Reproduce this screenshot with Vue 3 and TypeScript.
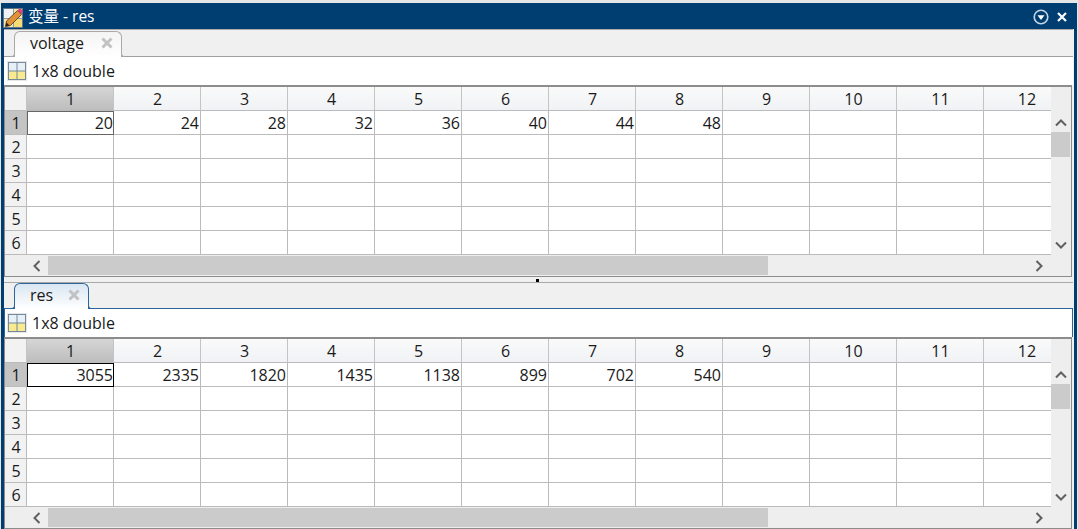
<script setup lang="ts">
interface Pane {
  name: string
  values: number[]
  active: boolean
}

const panes: Pane[] = [
  { name: 'voltage', values: [20, 24, 28, 32, 36, 40, 44, 48], active: false },
  { name: 'res', values: [3055, 2335, 1820, 1435, 1138, 899, 702, 540], active: true }
]
const columns = Array.from({ length: 12 }, (_, i) => i + 1)
const rows = [1, 2, 3, 4, 5, 6]
</script>

<template>
  <div class="window">
    <header class="titlebar">
      <svg class="app-icon" width="20" height="20" viewBox="0 0 20 20">
        <rect x="0.5" y="0.5" width="19" height="19" fill="#f5e9a8" stroke="#5f7587" />
        <rect x="1" y="1" width="9" height="9" fill="#eef2f5" />
        <rect x="10" y="10" width="9" height="9" fill="#f5dc74" />
        <path d="M1 10.5h18M10.5 1v18" stroke="#8b9aa6" />
        <path d="M2.5 18.5l1-5.5L14.5 2.5l4 4L7.5 17.5z" fill="#e0913a" stroke="#5e3f20" stroke-width="0.9" />
        <path d="M2.5 18.5l1-4 3 3z" fill="#2e2114" />
        <path d="M14.5 2.5L17 0l3 3-1.500 3.500z" fill="#d4487a" />
      </svg>
      <span class="title">变量 - res</span>
      <svg class="ctl" width="16" height="16" viewBox="0 0 16 16">
        <circle cx="8" cy="8" r="6.800" fill="none" stroke="#c4d6e6" stroke-width="1.6" />
        <path d="M4.500 6.200h7L8 11z" fill="#fff" />
      </svg>
      <svg class="ctl close" width="12" height="12" viewBox="0 0 12 12">
        <path d="M2 2l8 8M10 2l-8 8" stroke="#fff" stroke-width="2.2" />
      </svg>
    </header>

    <div class="body">
      <template v-for="(pane, idx) in panes" :key="pane.name">
        <div v-if="idx > 0" class="splitter"><i class="dot"></i></div>
        <section class="pane" :class="{ active: pane.active }">
          <div class="tabstrip">
            <div class="tab">
              <span class="tab-name">{{ pane.name }}</span>
              <svg class="tab-x" width="14" height="14" viewBox="0 0 14 14">
                <path d="M2.500 2.500l9 9M11.500 2.500l-9 9" stroke="#c2c2c2" stroke-width="3" />
              </svg>
            </div>
          </div>
          <div class="toolbar">
            <svg width="20" height="20" viewBox="0 0 20 20">
              <rect x="0" y="0" width="20" height="20" fill="#e6e6e6" />
              <rect x="1.500" y="1.500" width="17" height="17" fill="#fff" stroke="#74899b" />
              <rect x="2" y="2" width="16" height="8" fill="#e8f0f7" />
              <rect x="2" y="10" width="16" height="8" fill="#f9e98f" />
              <path d="M2 10h16M10 2v16" stroke="#74899b" />
            </svg>
            <span>1x8 double</span>
          </div>
          <div class="sheet">
            <div class="grid-row head">
              <div class="corner"></div>
              <div v-for="c in columns" :key="c" class="col-head" :class="{ sel: c === 1 }">{{ c }}</div>
              <div class="gutter"></div>
            </div>
            <div class="main">
              <div class="rows">
                <div v-for="r in rows" :key="r" class="grid-row">
                  <div class="row-head" :class="{ sel: r === 1 }">{{ r }}</div>
                  <div
                    v-for="c in columns"
                    :key="c"
                    class="cell"
                    :class="{ current: r === 1 && c === 1 }"
                  >{{ r === 1 ? pane.values[c - 1] : '' }}</div>
                </div>
              </div>
              <div class="vscroll">
                <svg width="12" height="8" viewBox="0 0 12 8"><path d="M1 6.500l5-5 5 5" fill="none" stroke="#606060" stroke-width="2" /></svg>
                <div class="vtrack"><div class="vthumb"></div></div>
                <svg width="12" height="8" viewBox="0 0 12 8"><path d="M1 1.500l5 5 5-5" fill="none" stroke="#606060" stroke-width="2" /></svg>
              </div>
            </div>
            <div class="hscroll">
              <svg width="8" height="12" viewBox="0 0 8 12"><path d="M6.500 1l-5 5 5 5" fill="none" stroke="#606060" stroke-width="2" /></svg>
              <div class="htrack"><div class="hthumb"></div></div>
              <svg width="8" height="12" viewBox="0 0 8 12"><path d="M1.500 1l5 5-5 5" fill="none" stroke="#606060" stroke-width="2" /></svg>
            </div>
          </div>
        </section>
      </template>
    </div>
  </div>
</template>

<style>
html, body { margin: 0; background: #fff; overflow: hidden; }
</style>

<style scoped>
.window {
  width: 1078px;
  height: 529px;
  box-sizing: border-box;
  padding: 3px 1px 0;
  background: #e4e6e8;
  font-family: "Open Sans", "Noto Sans CJK SC", sans-serif;
  font-size: 16px;
  color: #1a1a1a;
  display: flex;
  flex-direction: column;
  overflow: hidden;
}
.titlebar {
  height: 26px;
  flex: none;
  background: #003e72;
  color: #fff;
  display: flex;
  align-items: center;
  padding: 0 9px 0 2px;
  gap: 5px;
}
.app-icon { flex: none; margin-top: 4px; }
.title { flex: 1; font-size: 15.5px; margin-top: -2px; }
.ctl { flex: none; margin-top: 1px; }
.close { margin-left: 2px; }
.body {
  flex: 1;
  border-left: 3px solid #003e72;
  border-right: 3px solid #003e72;
  background: #f0f0f0;
  display: flex;
  flex-direction: column;
  min-height: 0;
}
.splitter {
  height: 5px;
  flex: none;
  position: relative;
}
.dot {
  position: absolute;
  left: 532px;
  top: 2px;
  width: 3px;
  height: 3px;
  background: #000;
}
.pane { display: flex; flex-direction: column; }
.tabstrip {
  height: 28px;
  flex: none;
  border-top: 1px solid #a9a9a9;
  border-bottom: 1px solid #a0a0a0;
  box-sizing: border-box;
  padding: 1px 0 0 10px;
  display: flex;
  margin-right: 1px;
}
.active .tabstrip {
  height: 27px;
  padding-top: 0;
  border-bottom-color: #2c659c;
}
.tab {
  width: 108px;
  height: 26px;
  margin-bottom: -1px;
  box-sizing: border-box;
  border: 1px solid #a9a9a9;
  border-bottom: 0;
  border-radius: 6px 6px 0 0;
  background: linear-gradient(#f4f4f4, #fff);
  display: flex;
  align-items: center;
  padding: 0 7px 4px 15px;
  justify-content: space-between;
  position: relative;
}
.tab::before,
.tab::after {
  content: "";
  position: absolute;
  bottom: 0;
  width: 3px;
  height: 3px;
  border-bottom: 1px solid #a9a9a9;
}
.tab::before { left: -4px; border-right: 1px solid #a9a9a9; border-bottom-right-radius: 3px; }
.tab::after { right: -4px; border-left: 1px solid #a9a9a9; border-bottom-left-radius: 3px; }
.active .tab {
  width: 75px;
  border-color: #2c659c;
  background: linear-gradient(#d9e6f2, #fff);
}
.active .tab::before,
.active .tab::after { border-color: #2c659c; }
.toolbar {
  height: 28px;
  flex: none;
  box-sizing: border-box;
  background: #fff;
  display: flex;
  align-items: center;
  gap: 5px;
  padding: 0 0 0 3px;
  margin-right: 1px;
}
.active .toolbar {
  border-left: 1px solid #2c659c;
  border-right: 1px solid #2c659c;
  padding-left: 2px;
}
.sheet {
  border: 1px solid #8c8c8c;
  border-top-width: 2px;
  margin-right: 2px;
  background: #eee;
}
.grid-row { display: flex; }
.head { height: 24px; }
.corner { width: 22px; flex: none; box-sizing: border-box; border-right: 1px solid #c4c4c4; border-bottom: 1px solid #bbb; background: #f2f2f2; }
.col-head {
  width: 87px;
  flex: none;
  box-sizing: border-box;
  border-right: 1px solid #c4c4c4;
  border-bottom: 1px solid #bbb;
  background: linear-gradient(#fafafa, #f0f2f5);
  text-align: center;
  line-height: 25px;
  padding-left: 1px;
}
.col-head.sel { background: linear-gradient(#d6d6d6, #bdbdbd); }
.col-head:nth-child(13) { width: 67px; border-right: 0; padding-left: 19px; }
.gutter { width: 20px; flex: none; background: #eee; }
.main { display: flex; }
.rows { width: 1046px; flex: none; overflow: hidden; }
.row-head {
  width: 22px;
  height: 24px;
  flex: none;
  box-sizing: border-box;
  border-right: 1px solid #bbb;
  border-bottom: 1px solid #bbb;
  background: #f2f2f2;
  text-align: center;
  line-height: 25px;
  padding-left: 1px;
}
.row-head.sel { background: #c4c4c4; }
.cell {
  width: 87px;
  height: 24px;
  flex: none;
  box-sizing: border-box;
  border-right: 1px solid #bbb;
  border-bottom: 1px solid #bbb;
  background: #fff;
  text-align: right;
  line-height: 25px;
  padding-right: 1px;
}
.cell:last-child { width: 67px; border-right: 0; }
.cell.current { border: 1px solid #666; line-height: 23px; padding-right: 0; }
.active .cell.current { border-color: #000; }
.vscroll {
  width: 20px;
  flex: none;
  display: flex;
  flex-direction: column;
  align-items: center;
  padding: 8px 0 6px;
  box-sizing: border-box;
  gap: 5px;
}
.vtrack { flex: 1; width: 100%; }
.vthumb { height: 25px; width: 19px; background: #cbcbcb; }
.hscroll {
  height: 21px;
  display: flex;
  align-items: center;
  padding: 0 28px;
  gap: 7px;
}
.htrack { flex: 1; height: 19px; }
.hthumb { width: 720px; height: 100%; background: #cbcbcb; }
</style>
